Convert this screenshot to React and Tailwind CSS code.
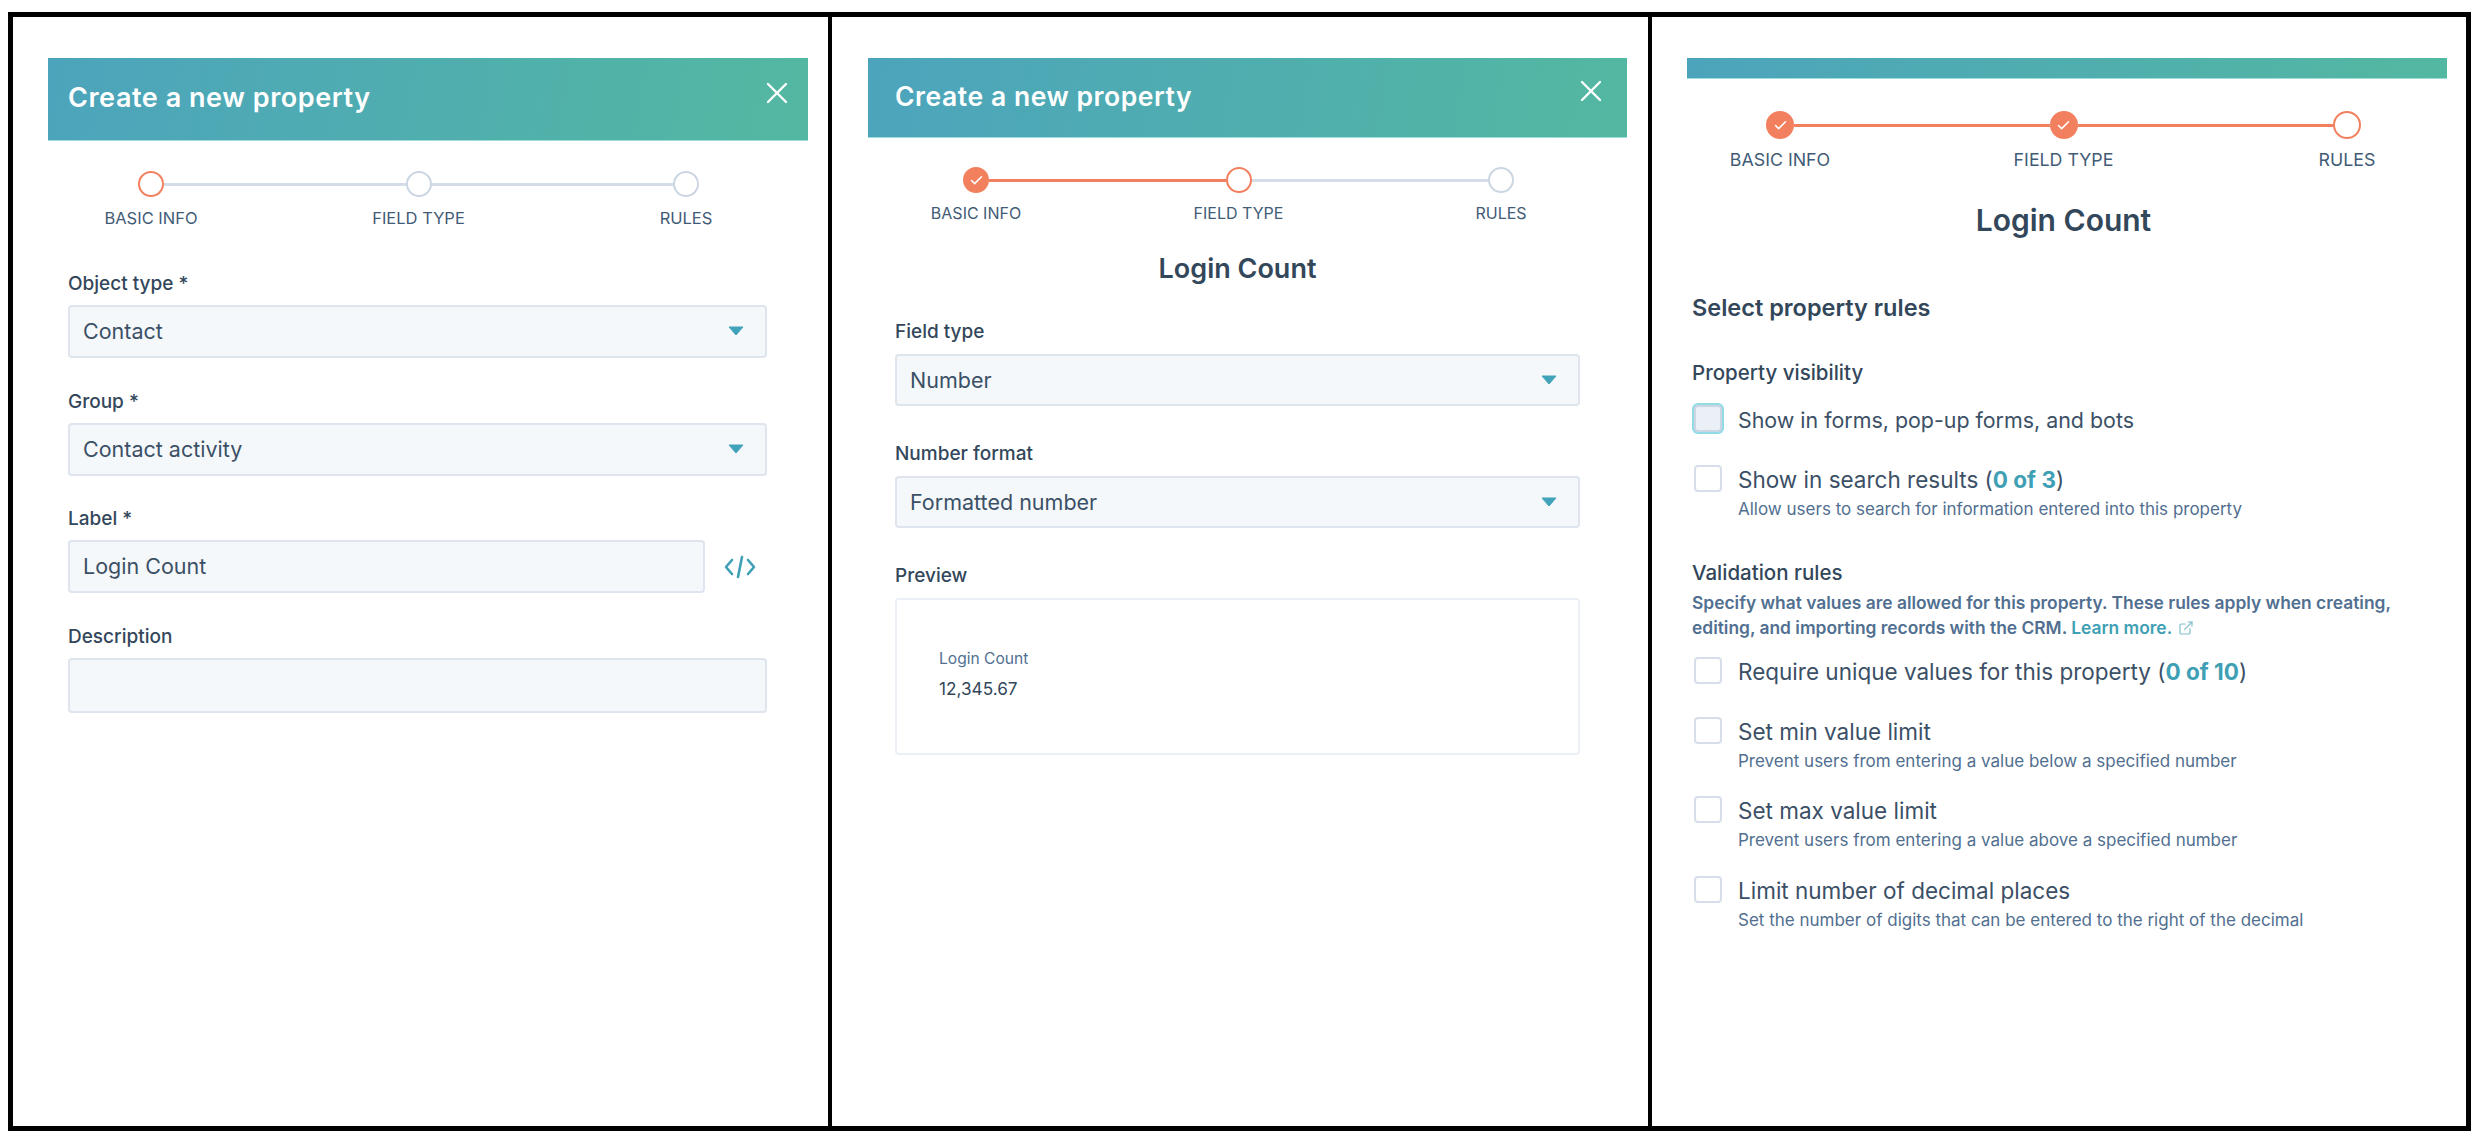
import React from 'react';
import { Check, ExternalLink } from 'lucide-react';

function Header({ title, titleSize, className }) {
  return (
    <div className={`bg-linear-[100deg] from-[#4ca4bc] to-[#53b8a1] border-b border-[#9fdcdc] flex justify-between items-start ${className}`}>
      {title && (
        <>
          <h1 className={`${titleSize} leading-[32px] font-semibold text-white tracking-[0.55px]`}>{title}</h1>
          <svg viewBox="0 0 22 22" className="w-[22px] h-[22px]" stroke="white" strokeWidth="2.4" strokeLinecap="round">
            <line x1="2" y1="2" x2="20" y2="20" />
            <line x1="20" y1="2" x2="2" y2="20" />
          </svg>
        </>
      )}
    </div>
  );
}

function Stepper({ current, className, circle, labelGap, labelSize }) {
  const steps = ['BASIC INFO', 'FIELD TYPE', 'RULES'];
  return (
    <div className={className}>
      <div className="flex items-center">
        {steps.map((s, i) => (
          <React.Fragment key={s}>
            <div
              className={`${circle} shrink-0 rounded-full border-[2.5px] flex items-center justify-center ${
                i < current
                  ? 'bg-[#f2805f] border-[#f2805f]'
                  : i === current
                  ? 'bg-white border-[#f2805f]'
                  : 'bg-white border-[#cbd6e2]'
              }`}
            >
              {i < current && <Check className="w-[15px] h-[15px] text-white" strokeWidth={2.5} />}
            </div>
            {i < 2 && <div className={`flex-1 h-[3px] ${i < current ? 'bg-[#f2805f]' : 'bg-[#d3dce8]'}`} />}
          </React.Fragment>
        ))}
      </div>
      <div className={`flex justify-between ${labelGap}`}>
        {steps.map((s) => (
          <div key={s} className={`${circle} !h-[20px] flex justify-center whitespace-nowrap ${labelSize} leading-[20px] text-[#425b76]`}>
            {s}
          </div>
        ))}
      </div>
    </div>
  );
}

function Caret() {
  return (
    <svg viewBox="0 0 16 10" className="w-[16px] h-[10px] mb-[1px]">
      <path d="M1 1 L15 1 L8 9 Z" fill="#41a3b9" stroke="#41a3b9" strokeLinejoin="round" />
    </svg>
  );
}

function Field({ label, children, className }) {
  return (
    <div className={className}>
      <div className="text-[19px] leading-[22px] h-[32px] font-medium text-[#33475b]">{label}</div>
      {children}
    </div>
  );
}

function Box({ value, caret, className }) {
  return (
    <div className={`bg-[#f5f8fa] border-2 border-[#dfe5ee] rounded-[4px] flex items-center justify-between pl-[13px] pr-[21px] text-[21.5px] text-[#3b5066] ${className}`}>
      <span>{value}</span>
      {caret && <Caret />}
    </div>
  );
}

function Rule({ text, count, sub, focused, size = 'text-[22.5px]', className }) {
  return (
    <div className={`flex gap-[16px] ml-[2px] ${className}`}>
      <div
        className={`w-[28px] h-[27px] shrink-0 rounded-[4px] border-2 ${
          focused
            ? 'bg-[#eaf0f6] border-[#cbd6e2] ring-2 ring-[#8fdbe6]'
            : 'bg-white border-[#d6dfe9]'
        }`}
      />
      <div className="mt-[3px]">
        <div className={`${size} leading-[24px] text-[#3b5066] whitespace-nowrap`}>
          {text}
          {count && (
            <>
              {' ('}
              <span className="font-bold text-[#3f9fb5]">{count}</span>
              {')'}
            </>
          )}
        </div>
        {sub && <div className="mt-[7px] text-[17px] leading-[20px] text-[#516f90] whitespace-nowrap">{sub}</div>}
      </div>
    </div>
  );
}

function PanelOne() {
  return (
    <div className="w-[819px] border-r-4 border-black pt-[41px] pl-[35px]">
      <Header title="Create a new property" titleSize="text-[27px]" className="w-[760px] h-[83px] pl-[20px] pr-[20px] pt-[24px]" />
      <Stepper current={0} className="ml-[90px] w-[561px] mt-[30px]" circle="w-[26px] h-[26px]" labelGap="mt-[11px]" labelSize="text-[16.5px]" />
      <div className="ml-[20px] mt-[45px] flex flex-col gap-[32.5px]">
        <Field label="Object type *">
          <Box value="Contact" caret className="w-[699px] h-[53px]" />
        </Field>
        <Field label="Group *">
          <Box value="Contact activity" caret className="w-[699px] h-[53px]" />
        </Field>
        <Field label="Label *">
          <div className="flex items-center">
            <Box value="Login Count" className="w-[637px] h-[53px]" />
            <svg viewBox="0 0 32 24" className="w-[32px] h-[24px] ml-[19px]" fill="none" stroke="#3f9fb5" strokeWidth="2.6" strokeLinecap="round" strokeLinejoin="round">
              <path d="M8 5 L2 12 L8 19" />
              <path d="M24 5 L30 12 L24 19" />
              <path d="M18 2 L14 22" />
            </svg>
          </div>
        </Field>
        <Field label="Description">
          <Box value="" className="w-[699px] h-[55px]" />
        </Field>
      </div>
    </div>
  );
}

function PanelTwo() {
  return (
    <div className="w-[820px] border-r-4 border-black pt-[41px] pl-[36px]">
      <Header title="Create a new property" titleSize="text-[26.5px]" className="w-[759px] h-[80px] pl-[27px] pr-[25px] pt-[22px]" />
      <Stepper current={1} className="ml-[95px] w-[551px] mt-[29px]" circle="w-[26px] h-[26px]" labelGap="mt-[10px]" labelSize="text-[16px]" />
      <div className="ml-[27px] w-[685px]">
        <h2 className="mt-[30px] text-center text-[27px] leading-[32px] font-semibold text-[#33475b]">Login Count</h2>
        <div className="mt-[36px] flex flex-col gap-[37px]">
          <Field label="Field type" className="[&>div:first-child]:h-[33px]">
            <Box value="Number" caret className="w-[685px] h-[52px]" />
          </Field>
          <Field label="Number format" className="[&>div:first-child]:h-[33px]">
            <Box value="Formatted number" caret className="w-[685px] h-[52px]" />
          </Field>
          <Field label="Preview" className="[&>div:first-child]:h-[33px]">
            <div className="w-[685px] h-[157px] border-2 border-[#eaf0f6] rounded-[4px] pt-[49px] pl-[42px]">
              <div className="text-[15.6px] leading-[20px] text-[#516f90]">Login Count</div>
              <div className="mt-[10px] text-[17.2px] leading-[20px] text-[#33475b]">12,345.67</div>
            </div>
          </Field>
        </div>
      </div>
    </div>
  );
}

function PanelThree() {
  return (
    <div className="flex-1 pt-[41px] pl-[35px]">
      <Header className="w-[760px] h-[21px]" />
      <Stepper current={2} className="ml-[79px] w-[595px] mt-[32px]" circle="w-[28px] h-[28px]" labelGap="mt-[11px]" labelSize="text-[17.8px]" />
      <div className="ml-[5px] w-[743px]">
        <h2 className="mt-[34px] text-center text-[30px] leading-[32px] font-semibold text-[#33475b]">Login Count</h2>
        <h3 className="mt-[58px] text-[23.5px] leading-[28px] font-semibold text-[#33475b]">Select property rules</h3>
        <h4 className="mt-[39px] text-[20.5px] leading-[24px] font-medium text-[#33475b]">Property visibility</h4>
        <Rule focused text="Show in forms, pop-up forms, and bots" size="text-[21.4px]" className="mt-[20px]" />
        <Rule text="Show in search results" count="0 of 3" sub="Allow users to search for information entered into this property" className="mt-[33px]" />
        <h4 className="mt-[42px] text-[20.5px] leading-[24px] font-medium text-[#33475b]">Validation rules</h4>
        <p className="mt-[5px] text-[17.4px] leading-[25px] font-semibold text-[#516f90] whitespace-nowrap">
          Specify what values are allowed for this property. These rules apply when creating,
          <br />
          editing, and importing records with the CRM. <span className="text-[#3f9fb5]">Learn more.</span>
          <ExternalLink className="inline w-[16px] h-[16px] ml-[6px] mb-[3px] text-[#7fbccb]" strokeWidth={1.75} />
        </p>
        <Rule text="Require unique values for this property" count="0 of 10" className="mt-[17px]" />
        <Rule text="Set min value limit" sub="Prevent users from entering a value below a specified number" className="mt-[33px]" />
        <Rule text="Set max value limit" sub="Prevent users from entering a value above a specified number" className="mt-[25px]" />
        <Rule text="Limit number of decimal places" sub="Set the number of digits that can be entered to the right of the decimal" className="mt-[26px]" />
      </div>
    </div>
  );
}

export default function App() {
  return (
    <div className="w-[2482px] h-[1148px] bg-white pl-[8px] pt-[12px] font-['Inter',sans-serif] overflow-hidden">
      <div className="flex w-[2463px] h-[1119px] border-[5px] border-black">
        <PanelOne />
        <PanelTwo />
        <PanelThree />
      </div>
    </div>
  );
}
